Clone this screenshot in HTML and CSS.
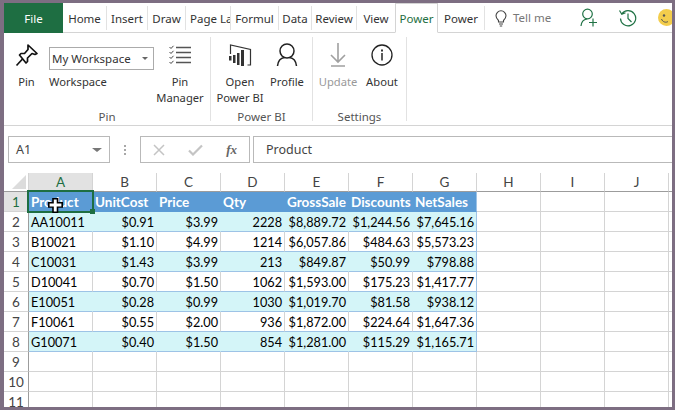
FILE: index.html
```html
<!DOCTYPE html>
<html lang="en">
<head>
<meta charset="utf-8">
<title>Excel - Power BI Publisher</title>
<link rel="stylesheet" href="styles.css">
</head>
<body>
<div class="app">
  <nav class="tabs">
    <div class="tab file">File</div>
    <div class="tab w44 sep">Home</div>
    <div class="tab w41 sep">Insert</div>
    <div class="tab w38 sep">Draw</div>
    <div class="tab w45 sep clip">Page La</div>
    <div class="tab w48 sep">Formul</div>
    <div class="tab w33 sep">Data</div>
    <div class="tab w45 sep">Review</div>
    <div class="tab w38">View</div>
    <div class="tab active">Power</div>
    <div class="tab w47 sep">Power</div>
    <div class="tell">
      <svg class="bulb" width="14" height="18" viewBox="0 0 14 18"><path d="M4.5 11.5C3 10 2 8.800 2 6.800a5 5 0 0 1 10 0c0 2-1 3.200-2.500 4.700V13h-5zM5 15h4M5.800 17h2.400" fill="none" stroke="#444" stroke-width="1.100"/></svg>
      <span>Tell me</span>
    </div>
    <div class="tab-icons">
      <svg width="18" height="19" viewBox="0 0 18 19"><g fill="none" stroke="#217346" stroke-width="1.200"><circle cx="7.500" cy="6" r="4.800"/><path d="M1 18c.3-4 2.500-6.500 6-7M9 14.500h8M13 10.500v8"/></g></svg>
      <svg width="20" height="18" viewBox="0 0 20 18"><g fill="none" stroke="#217346" stroke-width="1.200"><path d="M3.800 5A7.600 7.600 0 1 1 2.500 9.500M1.500 1.500l2.300 3.800 3.700-1.600M10 4.500v5l3.500 3.500"/></g></svg>
      <svg class="smile" width="17" height="17" viewBox="0 0 17 17"><circle cx="8.500" cy="8.500" r="8.500" fill="#f3cd4c"/><circle cx="6" cy="6.500" r="1.200" fill="#555"/><path d="M3.500 10c1 3 4.500 4 6.500 2.500" fill="none" stroke="#555"/></svg>
    </div>
  </nav>

  <section class="ribbon">
    <div class="group g-pin">
      <div class="group-body">
        <div class="btn w42">
          <div class="icon">
            <svg width="24" height="24" viewBox="0 0 24 24"><g fill="none" stroke="#111" stroke-width="1.700" stroke-linejoin="round"><path d="M13 2l9 8.500-2 1-3-1-4.500 4.500 0 3.500-1.500 1.500L4.500 12 6 10.500l3.500 0L13 6.500z"/><path d="M7.500 16L1.500 22.500"/></g></svg>
          </div>
          <div class="btn-label">Pin</div>
        </div>
        <div class="ws">
          <div class="combo"><span>My Workspace</span><i class="caret"></i></div>
          <div class="ws-label">Workspace</div>
        </div>
        <div class="btn w50">
          <div class="icon">
            <svg width="24" height="20" viewBox="0 0 24 20"><path d="M8 2.500h15M8 7.500h15M8 12.500h15M8 17.500h15" stroke="#555" stroke-width="1.600" fill="none"/><path d="M1.500 2l1.500 1.500L5.500.8M1.500 7l1.500 1.500 2.500-2.700M1.500 12l1.500 1.500 2.500-2.700M1.500 17l1.500 1.500 2.500-2.700" stroke="#444" fill="none"/></svg>
          </div>
          <div class="btn-label">Pin<br>Manager</div>
        </div>
      </div>
      <div class="group-label">Pin</div>
    </div>
    <div class="group g-bi">
      <div class="group-body">
        <div class="btn w56">
          <div class="icon">
            <svg width="24" height="24" viewBox="0 0 24 24"><path d="M2.500 11V2l20 4.500v15.500h-3" fill="none" stroke="#333" stroke-width="1.200"/><path d="M1 13h2.500v4.500H1zM5 12h2.500v8H5zM9 10h2.500v12H9zM13 7h3v16h-3z" fill="#333"/></svg>
          </div>
          <div class="btn-label">Open<br>Power BI</div>
        </div>
        <div class="btn w44b">
          <div class="icon">
            <svg width="24" height="24" viewBox="0 0 24 24"><g fill="none" stroke="#222" stroke-width="1.500"><circle cx="12" cy="8" r="7"/><path d="M2.500 23c.5-5 3.500-8 7-8.500M21.500 23c-.5-5-3.500-8-7-8.500"/></g></svg>
          </div>
          <div class="btn-label">Profile</div>
        </div>
      </div>
      <div class="group-label">Power BI</div>
    </div>
    <div class="group g-set">
      <div class="group-body">
        <div class="btn w44c disabled">
          <div class="icon">
            <svg width="24" height="24" viewBox="0 0 24 24"><path d="M12 0v19M5 12l7 7 7-7M5 23h14" fill="none" stroke="#a0a0a0" stroke-width="1.600"/></svg>
          </div>
          <div class="btn-label">Update</div>
        </div>
        <div class="btn w44d">
          <div class="icon">
            <svg width="24" height="24" viewBox="0 0 24 24"><circle cx="12" cy="12" r="10" fill="none" stroke="#222" stroke-width="1.300"/><path d="M11 6.500h2v2h-2zM11.200 10h1.600v7.500h-1.600z" fill="#333"/></svg>
          </div>
          <div class="btn-label">About</div>
        </div>
      </div>
      <div class="group-label">Settings</div>
    </div>
  </section>

  <section class="fbar">
    <div class="namebox"><span>A1</span><i class="caret dark"></i></div>
    <div class="dots"><b></b><b></b><b></b></div>
    <div class="fbtns">
      <svg width="12" height="12" viewBox="0 0 12 12"><path d="M1 1l10 10M11 1L1 11" stroke="#c4c4c4" stroke-width="1.500"/></svg>
      <svg width="15" height="12" viewBox="0 0 15 12"><path d="M1 6.500L5 10.500 14 1.500" fill="none" stroke="#c4c4c4" stroke-width="2.200"/></svg>
      <span class="fx">fx</span>
    </div>
    <div class="finput">Product</div>
  </section>

  <section class="sheet">
    <table class="grid">
      <thead>
        <tr><th class="corner"><svg width="14" height="14" viewBox="0 0 14 14"><path d="M14 0v14H0z" fill="#dcdcdc"/></svg></th><th class="on">A</th><th>B</th><th>C</th><th>D</th><th>E</th><th>F</th><th>G</th><th>H</th><th>I</th><th>J</th><th></th></tr>
      </thead>
      <tbody>
        <tr class="head"><th class="on">1</th><td>Product</td><td>UnitCost</td><td>Price</td><td>Qty</td><td>GrossSale</td><td>Discounts</td><td>NetSales</td><td class="e"></td><td class="e"></td><td class="e"></td><td class="e"></td></tr>
        <tr class="band"><th>2</th><td>AA10011</td><td class="n">$0.91</td><td class="n">$3.99</td><td class="n">2228</td><td class="n">$8,889.72</td><td class="n">$1,244.56</td><td class="n last">$7,645.16</td><td class="e"></td><td class="e"></td><td class="e"></td><td class="e"></td></tr>
        <tr class="plain"><th>3</th><td>B10021</td><td class="n">$1.10</td><td class="n">$4.99</td><td class="n">1214</td><td class="n">$6,057.86</td><td class="n">$484.63</td><td class="n last">$5,573.23</td><td class="e"></td><td class="e"></td><td class="e"></td><td class="e"></td></tr>
        <tr class="band"><th>4</th><td>C10031</td><td class="n">$1.43</td><td class="n">$3.99</td><td class="n">213</td><td class="n">$849.87</td><td class="n">$50.99</td><td class="n last">$798.88</td><td class="e"></td><td class="e"></td><td class="e"></td><td class="e"></td></tr>
        <tr class="plain"><th>5</th><td>D10041</td><td class="n">$0.70</td><td class="n">$1.50</td><td class="n">1062</td><td class="n">$1,593.00</td><td class="n">$175.23</td><td class="n last">$1,417.77</td><td class="e"></td><td class="e"></td><td class="e"></td><td class="e"></td></tr>
        <tr class="band"><th>6</th><td>E10051</td><td class="n">$0.28</td><td class="n">$0.99</td><td class="n">1030</td><td class="n">$1,019.70</td><td class="n">$81.58</td><td class="n last">$938.12</td><td class="e"></td><td class="e"></td><td class="e"></td><td class="e"></td></tr>
        <tr class="plain"><th>7</th><td>F10061</td><td class="n">$0.55</td><td class="n">$2.00</td><td class="n">936</td><td class="n">$1,872.00</td><td class="n">$224.64</td><td class="n last">$1,647.36</td><td class="e"></td><td class="e"></td><td class="e"></td><td class="e"></td></tr>
        <tr class="band"><th>8</th><td>G10071</td><td class="n">$0.40</td><td class="n">$1.50</td><td class="n">854</td><td class="n">$1,281.00</td><td class="n">$115.29</td><td class="n last">$1,165.71</td><td class="e"></td><td class="e"></td><td class="e"></td><td class="e"></td></tr>
        <tr><th>9</th><td class="e"></td><td class="e"></td><td class="e"></td><td class="e"></td><td class="e"></td><td class="e"></td><td class="e"></td><td class="e"></td><td class="e"></td><td class="e"></td><td class="e"></td></tr>
        <tr><th>10</th><td class="e"></td><td class="e"></td><td class="e"></td><td class="e"></td><td class="e"></td><td class="e"></td><td class="e"></td><td class="e"></td><td class="e"></td><td class="e"></td><td class="e"></td></tr>
        <tr><th>11</th><td class="e"></td><td class="e"></td><td class="e"></td><td class="e"></td><td class="e"></td><td class="e"></td><td class="e"></td><td class="e"></td><td class="e"></td><td class="e"></td><td class="e"></td></tr>
      </tbody>
    </table>
    <div class="selection"><i class="handle"></i></div>
    <svg class="cursor" width="15" height="15" viewBox="0 0 15 17" preserveAspectRatio="none"><path d="M5 .8h4.500v4.500h4.700v5H9.500v5.900H5v-5.900H.8v-5H5z" fill="#fff" stroke="#000" stroke-width="1.600"/></svg>
  </section>
</div>
</body>
</html>
```
FILE: styles.css
```css
* { box-sizing: border-box; }
html, body { margin: 0; height: 100%; }
body { background: #7d6e82; padding: 3px 3px 3px 4px; overflow: hidden; font-family: "Noto Sans", "Open Sans", sans-serif; font-size: 12px; color: #333; }
.app { width: 668px; height: 404px; background: #fff; display: flex; flex-direction: column; overflow: hidden; }

/* tabs */
.tabs { height: 30px; flex: none; display: flex; border-bottom: 1px solid #d4d4d4; align-items: stretch; }
.tab { flex: none; display: flex; align-items: center; justify-content: center; height: 24px; margin-top: 3px; white-space: nowrap; overflow: hidden; font-size: 11.500px; color: #333; }
.sep { border-right: 1px solid #e2e2e2; }
.clip { justify-content: flex-start; padding-left: 4px; }
.file { width: 59px; height: 30px; margin-top: 0; background: #1e6e42; color: #fff; }
.w44 { width: 44px; } .w41 { width: 41px; } .w38 { width: 38px; } .w45 { width: 45px; } .w48 { width: 48px; } .w33 { width: 33px; } .w47 { width: 47px; }
.active { width: 43px; height: 30px; margin-top: 0; background: #fff; color: #1e6e42; border: 1px solid #d4d4d4; border-bottom: 1px solid #fff; }
.tell { flex: none; display: flex; align-items: center; padding-left: 9px; gap: 5px; color: #777; font-size: 11.500px; width: 95px; }
.bulb { flex: none; }
.tab-icons { flex: none; display: flex; align-items: center; gap: 20px; }
.smile { flex: none; }

/* ribbon */
.ribbon { height: 93px; flex: none; display: flex; border-bottom: 1px solid #d4d4d4; padding-top: 4px; }
.group { display: flex; flex-direction: column; border-right: 1px solid #e2e2e2; height: 84px; }
.g-pin { width: 207px; } .g-bi { width: 102px; } .g-set { width: 94px; }
.group-body { flex: 1; display: flex; }
.group-label { height: 12px; line-height: 16px; text-align: center; font-size: 11.500px; color: #555; }
.btn { display: flex; flex-direction: column; align-items: center; text-align: center; font-size: 11.200px; }
.icon { height: 32px; margin-top: 2px; display: flex; align-items: center; justify-content: center; }
.btn-label { line-height: 16px; margin-top: 3px; white-space: nowrap; }
.w42 { width: 45px; }
.w50 { width: 50px; }
.w56 { width: 56px; margin-left: 1px; }
.w44b { width: 38px; }
.w44c { width: 48px; margin-left: 1px; }
.w44d { width: 40px; }
.disabled { color: #999; }
.ws { width: 106px; display: flex; flex-direction: column; }
.combo { width: 105px; height: 23px; margin-top: 10px; border: 1px solid #ababab; display: flex; align-items: center; justify-content: space-between; padding: 0 5px 0 2px; font-size: 11.500px; }
.ws-label { margin-top: 4px; line-height: 16px; font-size: 11.200px; }
.caret { width: 0; height: 0; border: 3px solid transparent; border-top: 3px solid #666; border-bottom: 0; }
.caret.dark { border-width: 4px 5px 0; border-top-color: #777; }

/* formula bar */
.fbar { height: 47px; flex: none; display: flex; padding: 10px 0 10px 4px; align-items: stretch; }
.namebox { width: 102px; border: 1px solid #b9b9b9; display: flex; align-items: center; justify-content: space-between; padding: 0 7px; font-size: 12.500px; color: #444; }
.dots { width: 30px; display: flex; flex-direction: column; align-items: center; justify-content: center; gap: 2px; }
.dots b { width: 2px; height: 2px; background: #a8a8a8; }
.fbtns { width: 110px; border: 1px solid #b9b9b9; display: flex; align-items: center; justify-content: space-between; padding: 0 12px; }
.fx { font-family: "Liberation Serif", serif; font-style: italic; font-weight: bold; font-size: 13px; color: #666; }
.finput { flex: 1; margin-left: 3px; border: 1px solid #b9b9b9; border-right: 0; padding-left: 12px; display: flex; align-items: center; font-size: 12.500px; color: #444; }

/* sheet */
.sheet { position: relative; flex: 1; overflow: hidden; }
.grid { border-collapse: separate; border-spacing: 0; table-layout: fixed; width: 729px; font-family: Lato, "Open Sans", sans-serif; font-size: 12.700px; color: #000; }
.grid th { font-weight: 400; color: #444; background: #fff; padding: 0; text-align: center; font-size: 13.500px; font-family: Lato, sans-serif; }
.grid thead th { width: 64px; height: 19px; border-right: 1px solid #d4d4d4; border-bottom: 1px solid #9c9c9c; }
.grid thead th.corner { width: 25px; border-right: 1px solid #d4d4d4; vertical-align: bottom; text-align: right; line-height: 0; padding: 0 2px 2px 0; }
.grid thead th.on { background: #e2e2e2; color: #1e6e42; }
.grid tbody th { height: 20px; border-right: 1px solid #9c9c9c; border-bottom: 1px solid #d4d4d4; }
.grid tbody th.on { background: #e2e2e2; color: #1e6e42; }
.grid td { height: 20px; padding: 0 2px; white-space: nowrap; overflow: hidden; border-right: 1px solid #d4d4d4; border-bottom: 1px solid #d4d4d4; }
.n { text-align: right; }
.head td:not(.e) { background: #5b9bd5; color: #fff; font-weight: 700; font-size: 13.500px; border-right-color: #5b9bd5; border-bottom-color: #5b9bd5; }
.band td:not(.e) { background: #d4f5f8; border-right-color: #d4f5f8; border-bottom-color: #9dc3e6; }
.plain td:not(.e) { background: #fff; border-bottom-color: #9dc3e6; }
.head td:nth-child(8), .band td.last, .plain td.last { border-right-color: #9dc3e6; }
.selection { position: absolute; left: 23px; top: 17px; width: 67px; height: 23px; border: 2px solid #1e6e42; }
.handle { position: absolute; right: -3px; bottom: -3px; width: 5px; height: 5px; background: #1e6e42; }
.cursor { position: absolute; left: 44px; top: 25px; }
```
